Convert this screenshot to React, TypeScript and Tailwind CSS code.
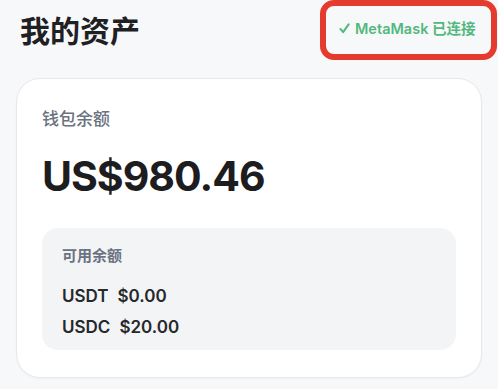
export default function App() {
  const font = { fontFamily: 'Inter, "Noto Sans CJK SC", sans-serif' }

  return (
    <div className="w-[498px] h-[389px] bg-[#f7f8fa] overflow-hidden" style={font}>
      <div className="flex items-start justify-between pl-[20px] pr-[1px]">
        <h1 className="mt-[13px] text-[30px] leading-[36px] font-bold text-[#1f2023]">我的资产</h1>
        <div className="w-[177px] h-[60px] border-[6px] border-[#e53b2e] rounded-[14px] flex items-center gap-[5px] pl-[13px] pb-[3px] text-[#52b87e]">
          <svg width="11" height="11" viewBox="0 0 12 12" fill="none" stroke="currentColor" strokeWidth="2.2" strokeLinecap="round" strokeLinejoin="round">
            <path d="M1.5 6.5 L4.5 10 L10.5 1.5" />
          </svg>
          <span className="text-[14.5px] font-semibold whitespace-nowrap">MetaMask 已连接</span>
        </div>
      </div>

      <div className="mx-4 mt-[18px] bg-white border border-[#e6e8ec] rounded-[24px] px-[25px] pt-7 pb-[27px] shadow-[0_1px_2px_rgba(0,0,0,0.03)]">
        <div className="text-[17px] leading-[24px] font-medium text-[#6b7280]">钱包余额</div>
        <div className="mt-[21px] text-[41px] leading-[48px] font-bold text-[#1d1d1f] tracking-[-1px]">US$980.46</div>

        <div className="mt-7 bg-[#f3f4f6] rounded-[16px] px-5 pt-[17px] pb-[7px]">
          <div className="text-[15px] leading-[22px] font-semibold text-[#6b7280]">可用余额</div>
          <div className="mt-[14px] text-[17px] leading-[31px] font-semibold text-[#26282c]">
            <div className="flex gap-[9px]"><span>USDT</span><span>$0.00</span></div>
            <div className="flex gap-[9px]"><span>USDC</span><span>$20.00</span></div>
          </div>
        </div>
      </div>
    </div>
  )
}
